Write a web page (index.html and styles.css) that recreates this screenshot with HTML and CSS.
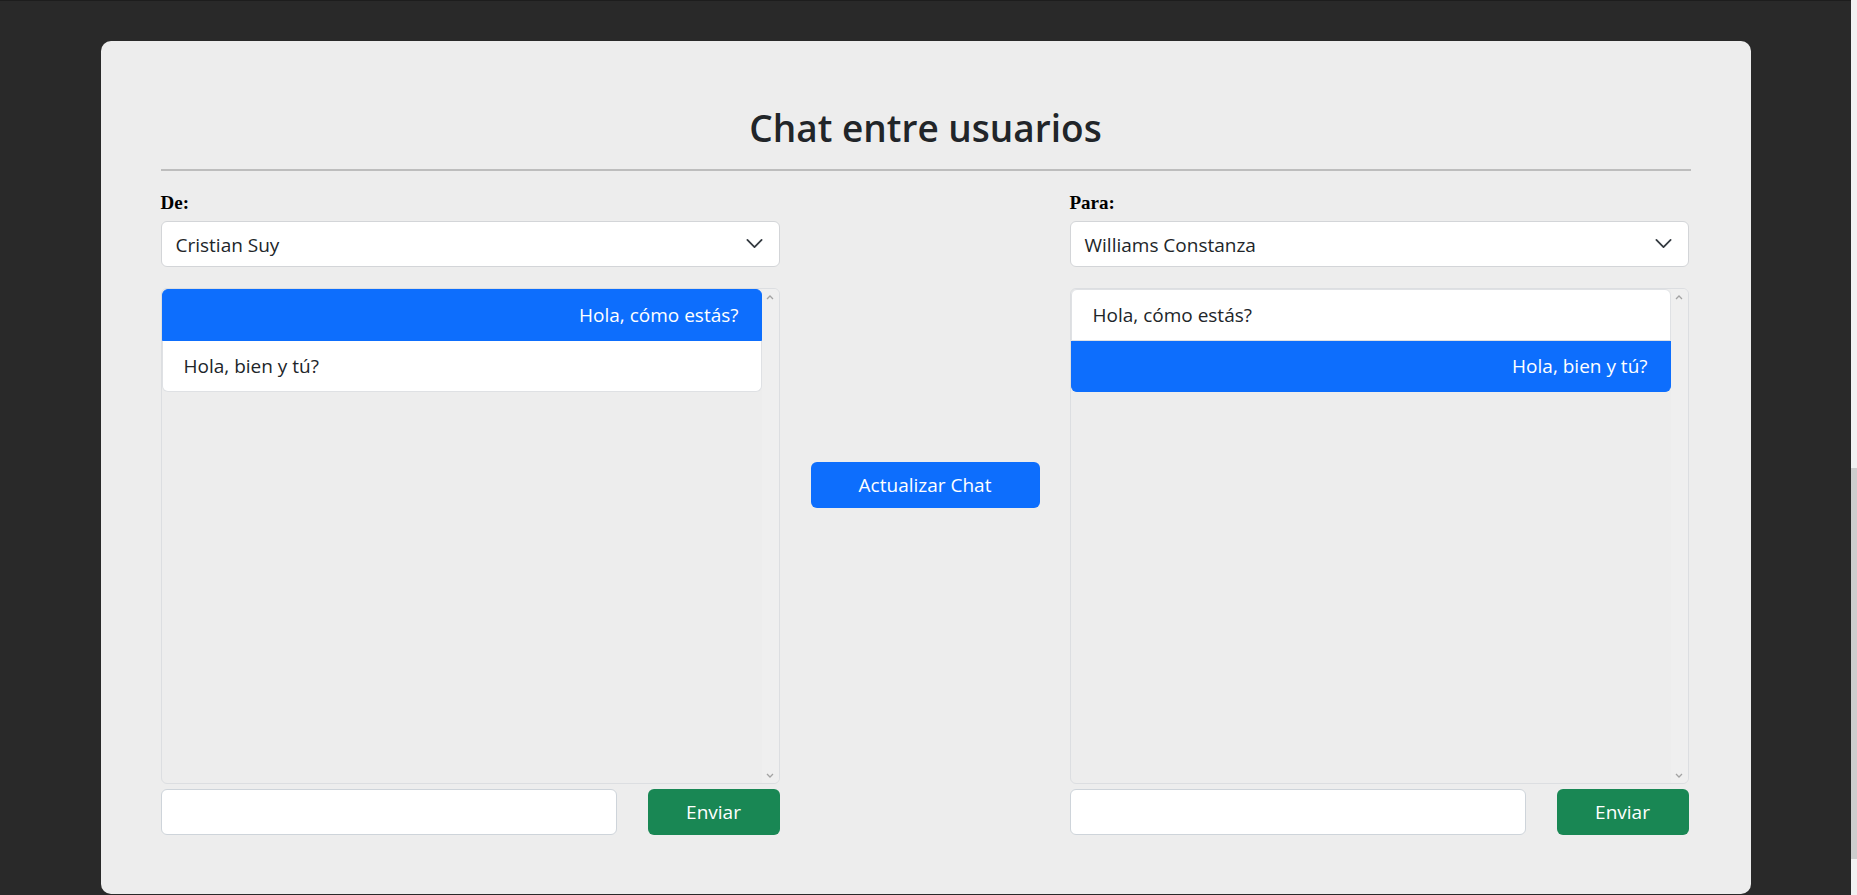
FILE: index.html
```html
<!DOCTYPE html>
<html lang="es">
<head>
<meta charset="utf-8">
<title>Chat entre usuarios</title>
<link rel="stylesheet" href="styles.css">
</head>
<body>
<div class="page">
  <main class="card">
    <h2 class="title">Chat entre usuarios</h2>
    <hr class="divider">
    <div class="layout">
      <section class="side">
        <label class="side-label">De:</label>
        <div class="select">
          <span>Cristian Suy</span>
          <svg class="chevron" viewBox="0 0 16 16" width="19" height="19"><path d="M2 5l6 6 6-6" fill="none" stroke="#343a40" stroke-width="1.5" stroke-linecap="round" stroke-linejoin="round"/></svg>
        </div>
        <div class="chat-box">
          <ul class="messages">
            <li class="msg msg-own">Hola, cómo estás?</li>
            <li class="msg">Hola, bien y tú?</li>
          </ul>
          <div class="scroll-track">
            <svg viewBox="0 0 8 5" width="8" height="5"><path d="M1 4l3-3 3 3" fill="none" stroke="#a3a3a3" stroke-width="1.3"/></svg>
            <svg viewBox="0 0 8 5" width="8" height="5"><path d="M1 1l3 3 3-3" fill="none" stroke="#a3a3a3" stroke-width="1.3"/></svg>
          </div>
        </div>
        <div class="composer">
          <input class="text-input" type="text">
          <button class="btn btn-send">Enviar</button>
        </div>
      </section>

      <div class="middle">
        <button class="btn btn-refresh">Actualizar Chat</button>
      </div>

      <section class="side">
        <label class="side-label">Para:</label>
        <div class="select">
          <span>Williams Constanza</span>
          <svg class="chevron" viewBox="0 0 16 16" width="19" height="19"><path d="M2 5l6 6 6-6" fill="none" stroke="#343a40" stroke-width="1.5" stroke-linecap="round" stroke-linejoin="round"/></svg>
        </div>
        <div class="chat-box">
          <ul class="messages">
            <li class="msg">Hola, cómo estás?</li>
            <li class="msg msg-own">Hola, bien y tú?</li>
          </ul>
          <div class="scroll-track">
            <svg viewBox="0 0 8 5" width="8" height="5"><path d="M1 4l3-3 3 3" fill="none" stroke="#a3a3a3" stroke-width="1.3"/></svg>
            <svg viewBox="0 0 8 5" width="8" height="5"><path d="M1 1l3 3 3-3" fill="none" stroke="#a3a3a3" stroke-width="1.3"/></svg>
          </div>
        </div>
        <div class="composer">
          <input class="text-input" type="text">
          <button class="btn btn-send">Enviar</button>
        </div>
      </section>
    </div>
  </main>
</div>
<div class="page-scrollbar"><div class="page-thumb"></div></div>
</body>
</html>
```
FILE: styles.css
```css
* { box-sizing: border-box; }

html, body {
  margin: 0;
  height: 895px;
  overflow: hidden;
}

body {
  background: #292929;
  border-top: 1px solid #1d1d1d;
  font-family: "Open Sans", "Noto Sans", sans-serif;
  font-size: 19px;
  color: #212529;
}

.page {
  width: 1851px;
  padding-top: 40px;
}

.card {
  width: 1650px;
  height: 853px;
  margin: 0 auto;
  background: #ededed;
  border-radius: 10px;
  padding: 64px 60px 0;
}

.title {
  margin: 0;
  text-align: center;
  font-size: 37px;
  font-weight: 600;
  line-height: 45px;
  color: #212529;
}

.divider {
  margin: 19px 0 0;
  border: 0;
  height: 2px;
  background: #bdbdbd;
}

.layout {
  margin-top: 21px;
  display: grid;
  grid-template-columns: 619px 290px 619px;
}

.side {
  display: flex;
  flex-direction: column;
}

.side-label {
  display: block;
  font-family: "Liberation Serif", "Times New Roman", serif;
  font-weight: bold;
  font-size: 19px;
  line-height: 21px;
  height: 21px;
  color: #000;
}

.select {
  margin-top: 8px;
  height: 46px;
  background: #fff;
  border: 1px solid #d3d5d8;
  border-radius: 6px;
  display: flex;
  align-items: center;
  justify-content: space-between;
  padding: 1px 15px 0 14px;
  line-height: 28px;
}

.chevron { display: block; margin-top: -2px; }

.chat-box {
  margin-top: 21px;
  height: 496px;
  border: 1px solid #dcdee1;
  border-radius: 6px;
  display: flex;
  overflow: hidden;
}

.messages {
  list-style: none;
  margin: 0;
  padding: 0;
  flex: 1;
  align-self: flex-start;
}

.msg {
  background: #fff;
  border: 1px solid #dfe1e4;
  border-top-width: 0;
  padding: 11px 22px 11px 21px;
  line-height: 28px;
}

.msg:first-child {
  border-top-width: 1px;
  border-radius: 6px 6px 0 0;
}

.msg:last-child {
  border-radius: 0 0 6px 6px;
}

.msg-own {
  background: #0d6efd;
  border-color: #0d6efd;
  color: #fff;
  text-align: right;
}

.scroll-track {
  width: 17px;
  background: #efefef;
  display: flex;
  flex-direction: column;
  justify-content: space-between;
  align-items: center;
  padding: 6px 0 5px;
}

.scroll-track svg { display: block; }

.composer {
  margin-top: 5px;
  display: grid;
  grid-template-columns: 1fr 132px;
  column-gap: 31px;
}

.text-input {
  height: 46px;
  border: 1px solid #ced4da;
  border-radius: 6px;
  background: #fff;
  font: inherit;
  padding: 0 14px;
}

.btn {
  font-family: inherit;
  font-size: 19px;
  border: 0;
  border-radius: 6px;
  color: #fff;
  height: 46px;
  cursor: pointer;
}

.btn-send {
  background: #198754;
}

.middle {
  display: flex;
  justify-content: center;
  align-items: flex-start;
  padding-top: 270px;
  padding-left: 1px;
}

.btn-refresh {
  width: 229px;
  background: #0d6efd;
}

.page-scrollbar {
  position: fixed;
  top: 0;
  right: 0;
  width: 6px;
  height: 895px;
  background: #f1f1f1;
}

.page-thumb {
  position: absolute;
  top: 468px;
  left: 0;
  width: 6px;
  height: 391px;
  background: #cdcdcd;
}
```
